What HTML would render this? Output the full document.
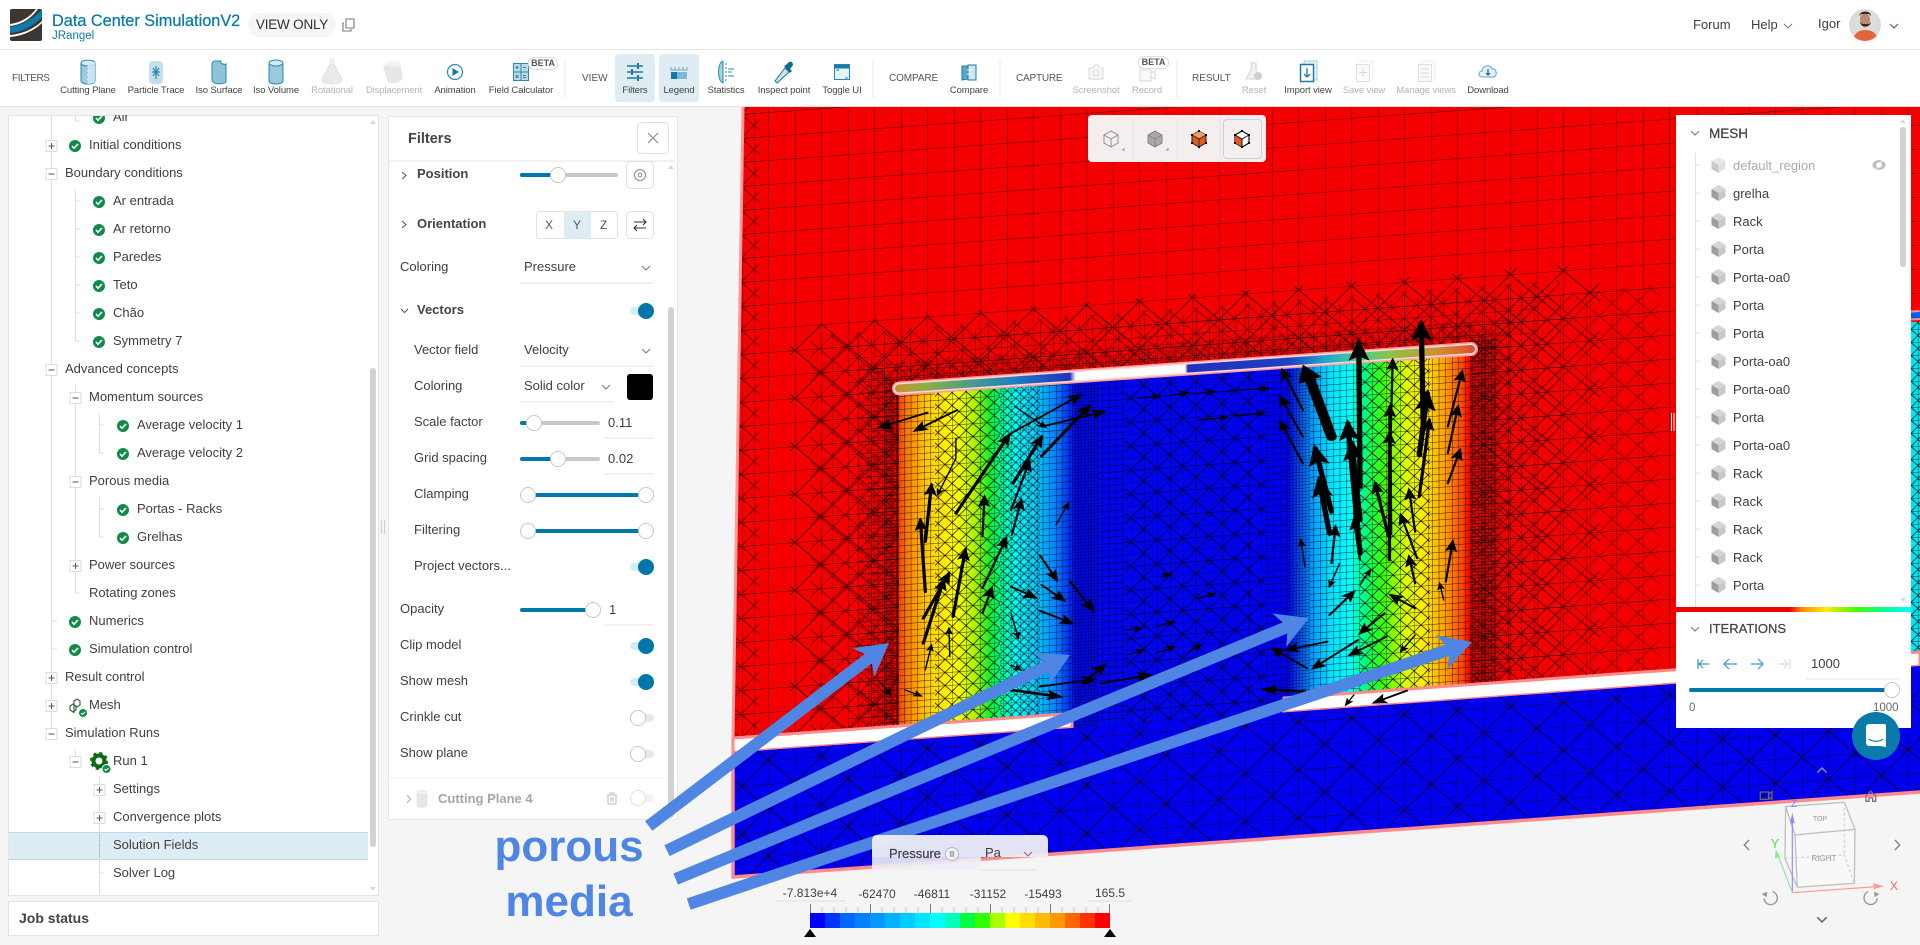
<!DOCTYPE html>
<html><head><meta charset="utf-8"><title>Data Center SimulationV2</title>
<style>
html,body{margin:0;padding:0;width:1920px;height:945px;overflow:hidden;background:#f5f5f5;font-family:"Liberation Sans",sans-serif;color:#3f3f3f}
svg{position:absolute;left:0;top:0}
.p{position:absolute;background:#fff}
.t{position:absolute;white-space:nowrap;line-height:16px;font-size:13px;z-index:4}
.l{position:absolute;white-space:nowrap;line-height:12px;font-size:9.5px;letter-spacing:-.1px;text-align:center;width:90px;top:85px;color:#444;z-index:4}
.o{color:#b4b4b4}
.s{font-size:10px;color:#555;top:73px;z-index:4;position:absolute;line-height:12px}
.b{font-weight:bold}
.g{font-size:9px;font-weight:bold;color:#555;line-height:11px;z-index:4;position:absolute;text-align:center;background:#fff;border:1px solid #ddd;border-radius:6px}
</style></head><body>

<svg width="1920" height="945" style="z-index:1">
<defs>
<pattern id="g26" width="26.5" height="24" patternUnits="userSpaceOnUse" patternTransform="matrix(1 -.0725 0 1 0 0)"><path d="M0 0H26.5M0 0V24" fill="none" stroke="#200" stroke-width=".7"/></pattern>
<pattern id="g13" width="13" height="12" patternUnits="userSpaceOnUse" patternTransform="matrix(1 -.0725 0 1 0 0)"><path d="M0 0H13M0 0V12" fill="none" stroke="#000" stroke-width=".8"/></pattern>
<pattern id="g6" width="6.6" height="6.5" patternUnits="userSpaceOnUse" patternTransform="matrix(1 -.0725 0 1 0 0)"><path d="M0 0H6.6M0 0V6.5" fill="none" stroke="#000" stroke-width=".8"/></pattern>
<pattern id="g3" width="3.2" height="3.2" patternUnits="userSpaceOnUse" patternTransform="matrix(1 -.0725 0 1 0 0)"><path d="M0 0H3.2M0 0V3.2" fill="none" stroke="#000" stroke-width=".7"/></pattern>
<pattern id="d40" width="53" height="48" patternUnits="userSpaceOnUse" patternTransform="matrix(1 -.0725 0 1 0 0)"><path d="M26.5 0L53 24L26.5 48L0 24Z" fill="none" stroke="#100" stroke-width=".7"/></pattern>
<pattern id="d20" width="26" height="24" patternUnits="userSpaceOnUse" patternTransform="matrix(1 -.0725 0 1 0 0)"><path d="M13 0L26 12L13 24L0 12ZM0 0H26M0 0V24" fill="none" stroke="#000" stroke-width=".75"/></pattern>
<pattern id="d10" width="14" height="13" patternUnits="userSpaceOnUse" patternTransform="matrix(1 -.0725 0 1 0 0)"><path d="M7 0L14 6.5L7 13L0 6.5ZM0 0H14M0 0V13" fill="none" stroke="#000" stroke-width=".65"/></pattern>
<pattern id="d6" width="8.5" height="8" patternUnits="userSpaceOnUse" patternTransform="matrix(1 -.0725 0 1 0 0)"><path d="M4.2 0L8.5 4L4.2 8L0 4ZM0 0H8.5M0 0V8" fill="none" stroke="#000" stroke-width=".55"/></pattern>
<linearGradient id="cylg" gradientUnits="userSpaceOnUse" x1="899" y1="0" x2="1470" y2="0">
<stop offset="0" stop-color="#e84a00"/><stop offset=".02" stop-color="#ff8c00"/><stop offset=".055" stop-color="#ffd400"/><stop offset=".1" stop-color="#ffff00"/><stop offset=".135" stop-color="#a8f000"/><stop offset=".16" stop-color="#10ee30"/><stop offset=".185" stop-color="#00ffb0"/><stop offset=".205" stop-color="#00ffff"/><stop offset=".245" stop-color="#00c4ff"/><stop offset=".275" stop-color="#0080ff"/><stop offset=".31" stop-color="#0008ee"/><stop offset=".68" stop-color="#0000f0"/><stop offset=".72" stop-color="#0090ff"/><stop offset=".755" stop-color="#00e0ff"/><stop offset=".79" stop-color="#00ffff"/><stop offset=".815" stop-color="#00ff80"/><stop offset=".85" stop-color="#40ff00"/><stop offset=".885" stop-color="#d8ff00"/><stop offset=".92" stop-color="#ffea00"/><stop offset=".955" stop-color="#ffa000"/><stop offset=".985" stop-color="#ff5000"/><stop offset="1" stop-color="#f50000"/>
</linearGradient>
<linearGradient id="cyl3" gradientUnits="userSpaceOnUse" x1="1790" y1="0" x2="1910" y2="0">
<stop offset="0" stop-color="#f50000"/><stop offset=".1" stop-color="#ff8c00"/><stop offset=".3" stop-color="#ffea00"/><stop offset=".55" stop-color="#40ff00"/><stop offset=".8" stop-color="#00ffa0"/><stop offset="1" stop-color="#00ffff"/>
</linearGradient>
<linearGradient id="bar" gradientUnits="userSpaceOnUse" x1="897" y1="0" x2="1473" y2="0">
<stop offset="0" stop-color="#c89030"/><stop offset=".05" stop-color="#8cb040"/><stop offset=".12" stop-color="#50a080"/><stop offset=".2" stop-color="#2080c0"/><stop offset=".3" stop-color="#2030c0"/><stop offset=".31" stop-color="#fff"/><stop offset=".5" stop-color="#fff"/><stop offset=".505" stop-color="#2030c0"/><stop offset=".68" stop-color="#2040c0"/><stop offset=".74" stop-color="#20a0d0"/><stop offset=".8" stop-color="#40d0a0"/><stop offset=".86" stop-color="#90c040"/><stop offset=".94" stop-color="#d09030"/><stop offset="1" stop-color="#e05030"/>
</linearGradient>
<clipPath id="hole"><polygon points="899,392 1470,352 1470,685 1284,698 1284,716 1072,732 1072,713 899,726"/></clipPath>
<clipPath id="wall"><polygon points="743,107 1920,107 1920,652 733,738"/></clipPath>
<marker id="ah" viewBox="0 0 10 8" refX="8" refY="4" markerWidth="5" markerHeight="4.4" orient="auto"><path d="M0 0L10 4L0 8L2 4Z" fill="#000"/></marker>
<marker id="ahs" viewBox="0 0 10 8" refX="8" refY="4" markerWidth="7" markerHeight="6" orient="auto"><path d="M0 0L10 4L0 8L2 4Z" fill="#000"/></marker>
</defs>

<polygon points="743,107 1920,107 1920,652 733,738" fill="#f50000"/>
<g clip-path="url(#wall)">
<rect x="730" y="107" width="1190" height="640" fill="url(#g26)"/>
<rect x="730" y="107" width="30" height="640" fill="url(#d20)" opacity=".7"/>
<polygon points="790,326 1600,262 1600,680 790,736" fill="url(#d40)"/>
<polygon points="810,336 1560,280 1560,680 810,736" fill="url(#d20)" opacity=".6"/>
<polygon points="848,340 1530,290 1530,680 848,730" fill="url(#g13)" opacity=".8"/>
<polygon points="860,364 1510,318 1510,680 860,728" fill="url(#d10)" opacity=".5"/>
<polygon points="868,372 1497,328 1497,690 868,730" fill="url(#g6)" opacity=".85"/>
<polygon points="884,378 899,378 899,730 884,730" fill="url(#g3)"/>
<polygon points="1470,340 1497,338 1497,690 1470,690" fill="url(#g3)"/>
<polygon points="1500,300 1660,285 1660,680 1500,690" fill="url(#d20)" opacity=".5"/>
</g>
<rect x="1676" y="605" width="244" height="9" fill="#f50000"/>
<rect x="1790" y="605" width="130" height="9" fill="url(#cyl3)"/>

<polygon points="899,392 1470,352 1470,685 1284,698 1284,716 1072,732 1072,713 899,726" fill="url(#cylg)"/>
<g clip-path="url(#hole)">
<rect x="899" y="340" width="36" height="400" fill="url(#g6)"/>
<rect x="935" y="340" width="65" height="400" fill="url(#d10)"/>
<rect x="1000" y="340" width="40" height="400" fill="url(#d6)"/>
<rect x="1040" y="340" width="32" height="400" fill="url(#g6)"/>
<rect x="1072" y="340" width="26" height="400" fill="url(#g3)"/>
<rect x="1098" y="340" width="27" height="400" fill="url(#g6)"/>
<rect x="1125" y="340" width="140" height="400" fill="url(#d20)"/>
<rect x="1125" y="340" width="140" height="400" fill="url(#g13)" opacity=".6"/>
<rect x="1265" y="340" width="23" height="400" fill="url(#g6)"/>
<rect x="1288" y="340" width="22" height="400" fill="url(#g3)"/>
<rect x="1310" y="340" width="50" height="400" fill="url(#g6)"/>
<rect x="1360" y="340" width="70" height="400" fill="url(#d10)"/>
<rect x="1430" y="340" width="40" height="400" fill="url(#g6)"/>
</g>

<polygon points="1911,322 1920,322 1920,652 1911,653" fill="#00e4f0"/>
<polygon points="1911,322 1920,322 1920,652 1911,653" fill="url(#d10)"/>
<path d="M1905 316L1920 315" stroke="#ff9090" stroke-width="10"/><path d="M1905 316L1920 315" stroke="#0060f0" stroke-width="6"/>

<path d="M899 388.5L1471 349" stroke="#ff9a9a" stroke-width="14" stroke-linecap="round"/>
<path d="M899 388.5L1471 349" stroke="#f8d8d8" stroke-width="11" stroke-linecap="round"/>
<path d="M899 388.5L1471 349" stroke="url(#bar)" stroke-width="8" stroke-linecap="round"/>

<polygon points="733,738 1072,713.5 1072,728 733,752.5" fill="#fff" stroke="#ff8a8a" stroke-width="3"/>
<polygon points="1284,698 1920,652 1920,666 1284,712.5" fill="#fff" stroke="#ff8a8a" stroke-width="3"/>

<polygon points="733,752.5 1072,728 1284,712.5 1920,666 1920,792 733,877" fill="#0000ee"/>
<polygon points="733,752.5 1072,728 1284,712.5 1920,666 1920,792 733,877" fill="url(#g26)"/>
<polygon points="733,752.5 1072,728 1284,712.5 1920,666 1920,792 733,877" fill="url(#d40)"/>
<path d="M733 752.5L733 877L1920 792" fill="none" stroke="#ff8a8a" stroke-width="3.5"/>
<path d="M743 107L733 738" fill="none" stroke="#ff9a9a" stroke-width="3"/>

<g transform="translate(860,320) scale(.4082,.3333)" fill="none" stroke="#000" stroke-linecap="round">
<g stroke-width="3.500" marker-end="url(#ahs)">
<path d="M680 235L735 228"/><path d="M750 228L805 218"/><path d="M815 222L870 215"/><path d="M900 212L1000 205"/>
<path d="M830 300L900 292"/><path d="M920 288L990 280"/>
<path d="M650 930L690 925"/><path d="M725 920L770 905"/><path d="M655 1005L695 990"/><path d="M725 1000L770 980"/><path d="M800 1000L835 975"/><path d="M740 770L760 760"/><path d="M830 835L870 820"/>
<path d="M380 260L455 322"/><path d="M235 355L235 415L190 525"/>
<path d="M220 1010L218 925"/><path d="M370 880L388 955"/><path d="M160 1050L175 975"/><path d="M370 1035L395 1050"/><path d="M45 1080L75 1125"/><path d="M110 1110L150 1128"/>
<path d="M480 615L510 550"/><path d="M1090 740L1080 660"/><path d="M1225 795L1250 750"/><path d="M1360 945L1325 995"/><path d="M1210 1125L1190 1155"/><path d="M1430 840L1420 790"/><path d="M1175 730L1150 800"/>
</g>
<g stroke-width="5.500" marker-end="url(#ahs)">
<path d="M165 278L48 322"/><path d="M238 270L135 332"/><path d="M445 320L598 275"/><path d="M370 340L540 225"/>
<path d="M370 570L415 425"/><path d="M372 645L395 540"/><path d="M300 650L305 530"/>
<path d="M300 805L358 655"/><path d="M300 880L323 805"/><path d="M370 800L430 833"/><path d="M445 795L500 842"/><path d="M515 785L570 870"/><path d="M440 872L520 910"/><path d="M440 705L482 780"/>
<path d="M440 1100L575 1078"/><path d="M545 1090L600 1035"/><path d="M590 1090L710 1065"/>
<path d="M1085 270L1035 150"/><path d="M1085 350L1030 230"/><path d="M1085 430L1030 305"/>
<path d="M1295 570L1305 120"/><path d="M1440 320L1475 155"/><path d="M1440 400L1465 260"/><path d="M1440 490L1470 390"/>
<path d="M1365 715L1325 585"/><path d="M1360 635L1345 510"/><path d="M1155 730L1165 620"/><path d="M1225 720L1210 600"/><path d="M1435 785L1452 665"/><path d="M1360 790L1345 710"/><path d="M1360 865L1300 825"/><path d="M1150 885L1210 815"/>
<path d="M1145 965L1045 990"/><path d="M1095 1045L1010 985"/><path d="M1220 960L1110 1045"/><path d="M1290 950L1200 1005"/><path d="M1285 880L1225 940"/><path d="M1340 1112L1260 1148"/>
</g>
<g stroke-width="8" marker-end="url(#ah)">
<path d="M235 580L365 345"/><path d="M445 408L562 258"/><path d="M375 490L445 350"/>
<path d="M160 665L175 495"/><path d="M160 815L148 600"/><path d="M155 895L218 760"/><path d="M155 970L205 780"/><path d="M228 890L258 690"/>
<path d="M370 1110L490 1130"/><path d="M1090 1115L990 1108"/>
<path d="M1300 640L1298 260"/><path d="M1297 720L1297 340"/><path d="M1370 530L1395 300"/><path d="M1295 650L1262 490"/>
</g>
<g stroke-width="13" marker-end="url(#ah)">
<path d="M1155 575L1115 385"/><path d="M1150 640L1125 480"/><path d="M1225 500L1222 70"/><path d="M1225 700L1195 310"/><path d="M1225 600L1205 370"/><path d="M1380 330L1375 10"/><path d="M1370 405L1390 220"/>
</g>
<path d="M1155 350L1100 170" stroke-width="26"/>
<path d="M1085 135L1075 190L1130 170Z" fill="#000"/>
</g>
</svg>

<!-- page chrome -->
<div class="p" style="left:0;top:0;width:1920px;height:49px;border-bottom:1.5px solid #e4e4e4;z-index:2"></div>
<div class="p" style="left:0;top:50px;width:1920px;height:56px;border-bottom:1.5px solid #e4e4e4;z-index:2"></div>
<div class="p" style="left:615px;top:54px;width:40px;height:48px;background:#dfecf3;border-radius:4px;z-index:2"></div>
<div class="p" style="left:659px;top:54px;width:40px;height:48px;background:#dfecf3;border-radius:4px;z-index:2"></div>

<div class="p" style="left:8px;top:115px;width:369px;height:779px;border:1px solid #e4e4e4;z-index:2;overflow:hidden"></div>
<div class="p" style="left:9px;top:832px;width:359px;height:26px;background:#deecf3;border-top:1px solid #b9dbe9;border-bottom:1px solid #b9dbe9;z-index:2"></div>
<div class="p" style="left:8px;top:901px;width:369px;height:33px;border:1px solid #e4e4e4;z-index:2"></div>
<div class="p" style="left:388px;top:116px;width:288px;height:702px;border:1px solid #e6e6e6;z-index:2"></div>
<div class="p" style="left:1676px;top:115px;width:235px;height:492px;z-index:2"></div>
<div class="p" style="left:1676px;top:612px;width:235px;height:116px;z-index:2"></div>
<div class="p" style="left:1088px;top:115px;width:178px;height:47px;background:#f4eeee;border-radius:4px;z-index:2"></div>
<div class="p" style="left:1223px;top:119px;width:37px;height:38px;background:transparent;border:1px solid #bcd6e4;border-radius:4px;z-index:2"></div>

<svg width="1920" height="945" style="z-index:3">
<defs>
<symbol id="ck" overflow="visible"><circle r="6" fill="#128a48"/><path d="M-3 0L-1 2.2L3 -2" fill="none" stroke="#fff" stroke-width="1.6"/></symbol>
<symbol id="ep" overflow="visible"><rect x="-5.5" y="-5.5" width="11" height="11" fill="#fff" stroke="#dcdcdc"/><path d="M-3 0H3M0 -3V3" stroke="#555"/></symbol>
<symbol id="em" overflow="visible"><rect x="-5.5" y="-5.5" width="11" height="11" fill="#fff" stroke="#dcdcdc"/><path d="M-3 0H3" stroke="#555"/></symbol>
<symbol id="cube" overflow="visible"><path d="M0 -8L7 -4L0 0L-7 -4Z" fill="#d6d6d6"/><path d="M-7 -4L0 0V8L-7 4Z" fill="#9e9e9e"/><path d="M7 -4L0 0V8L7 4Z" fill="#c9c9c9"/></symbol>
<symbol id="ton" overflow="visible"><rect x="-16" y="-4" width="24" height="8" rx="4" fill="#d5ecf6"/><circle r="8" fill="#0077aa"/></symbol>
<symbol id="tof" overflow="visible"><rect x="0" y="-4" width="16" height="8" rx="4" fill="#e8e8e8"/><circle r="7.5" fill="#fff" stroke="#c8c8c8"/></symbol>
<symbol id="th" overflow="visible"><circle r="7.5" fill="#fff" stroke="#c6c6c6"/></symbol>
<symbol id="cv" overflow="visible"><path d="M-4 -2L0 2L4 -2" fill="none" stroke="#777" stroke-width="1"/></symbol>
<symbol id="cy" overflow="visible"><path d="M-7 -9v18a7 3 0 0 0 14 0v-18" fill="#9cc9de" stroke="#2a88b0"/><ellipse cy="-9" rx="7" ry="3" fill="#d6eaf4" stroke="#2a88b0"/></symbol>
</defs>

<!-- logo -->
<rect x="10" y="9" width="32" height="32" rx="2" fill="#3b3632"/>
<path d="M10 27C20 26 33 20 42 9V17C34 26 22 32 10 33Z" fill="#0a7dae"/>
<path d="M10 35C22 34 34 29 42 21V23C34 31 22 36 10 37Z" fill="#fff"/>
<path d="M10 24C20 23 30 17 36 9H38C31 19 21 25 10 26Z" fill="#fff"/>
<path d="M344 23h-1v8h8v-2M346 19h8v9h-8z" fill="none" stroke="#777" stroke-width="1.1"/>
<!-- dividers -->
<path d="M565 60V98M873 60V98M1000 60V98M1177 60V98" stroke="#e8e8e8"/>

<g transform="translate(88,72)"><use href="#cy"/><path d="M0 -14V14" stroke="#fff" stroke-dasharray="2 2"/><path d="M0 -10h7v19a7 3 0 0 1 -7 3z" fill="#d6eaf4" opacity=".8"/></g>
<g transform="translate(156,72)"><rect x="-7" y="-11" width="14" height="23" rx="4" fill="#c4dfeb"/><path d="M-3 -4L3 4M3 -4L-3 4M0 -6V7M-4 0H4" stroke="#2a88b0" stroke-width="1.2"/></g>
<g transform="translate(219,72)"><path d="M-7 -8a3 3 0 0 1 3 -3h6c-3 2 4 4 5 3v18c-4 3-14 2-14-2z" fill="#8fc3da" stroke="#2a88b0"/></g>
<g transform="translate(276,72)"><use href="#cy"/></g>
<g transform="translate(332,72)" opacity=".3"><path d="M0 -12L10 8a10 4 0 0 1 -20 0z" fill="#bbb" stroke="#999"/><circle cy="-11" r="3" fill="#ccc"/></g>
<g transform="translate(394,72)" opacity=".35"><path d="M-11 -6L6 -9L9 6C5 13-6 12-7 8z" fill="#bbb"/><ellipse cx="-1" cy="-8" rx="8" ry="3" fill="#ddd"/></g>
<g transform="translate(455,72)"><circle r="7.5" fill="#fff" stroke="#2a88b0" stroke-width="1.2"/><path d="M-2.5 -4L4 0L-2.5 4Z" fill="#0a7dae"/></g>
<g transform="translate(521,72)"><rect x="-7.5" y="-8.5" width="15" height="17" fill="#bcdbe9" stroke="#2a88b0"/><path d="M0 -8.5V8.5M-7.5 0H7.5" stroke="#2a88b0"/><path d="M-5.5 -4.5h3M-4 -6v3M2 -4.5h3M-5.5 3l3 3M-2.5 3l-3 3M2 3.5h3M2 5.5h3" stroke="#0a6a90" stroke-width=".8"/></g>
<g transform="translate(635,72)" stroke="#1c7ba6" stroke-width="1.4" fill="none"><path d="M-8 -6H8M-8 0H8M-8 6H8"/><path d="M3 -9V-3M-3 -3V3M3 3V9" stroke-width="2"/></g>
<g transform="translate(679,72)"><path d="M-8 -5V-2H8V-5M-4 -5V-2M0 -5V-2M4 -5V-2" stroke="#6aa8c4" fill="none"/><rect x="-8" y="0" width="16" height="7" fill="#7fb8d0"/><rect x="-8" y="0" width="6" height="7" fill="#0a7dae"/></g>
<g transform="translate(726,72)"><path d="M-3 -11C-9 -9-9 9-3 11V-11" fill="#a8d0e2" stroke="#2a88b0"/><path d="M0 -9V9" stroke="#2a88b0" stroke-dasharray="2 2"/><path d="M2 -3H8M2 0H6M2 4H8" stroke="#2a88b0"/></g>
<g transform="translate(784,72)"><path d="M-7 11L-9 9L1 -4L5 0Z" fill="#cfe6f1" stroke="#1c7ba6"/><path d="M0 -6L6 1L8 -1L6 -3L9 -7C9 -10 7 -11 5 -10L2 -7Z" fill="#0a6a90"/></g>
<g transform="translate(842,72)"><rect x="-7.5" y="-7.5" width="15" height="15" fill="#e7f2f7" stroke="#2a88b0"/><rect x="-7.5" y="-7.5" width="15" height="4" fill="#1c7ba6"/><path d="M-5 -1v-1h2M5 5v1h-2" stroke="#2a88b0" fill="none"/></g>
<g transform="translate(969,72)"><path d="M-7 -6H-1V7L-7 8Z" fill="#5fa6c6" stroke="#1c7ba6"/><path d="M-1 -7H7V8H-1Z" fill="#cfe6f1" stroke="#1c7ba6"/><path d="M-2 -2H3M-2 2H2" stroke="#fff"/></g>
<g transform="translate(1096,72)" opacity=".45"><path d="M-7 -4H-3L-1 -7H2L4 -4H7V7H-7Z" fill="#f2f2f2" stroke="#aaa"/><circle cy="1" r="3" fill="none" stroke="#aaa"/></g>
<g transform="translate(1147,74)" opacity=".45"><rect x="-7" y="-4" width="11" height="11" fill="#f2f2f2" stroke="#aaa"/><path d="M4 -1L8 -3V5L4 3M-8 -6H5" fill="none" stroke="#aaa"/></g>
<g transform="translate(1254,72)" opacity=".4"><path d="M-3 -9V-2L-8 7H4L2 -2V-9Z" fill="#ddd" stroke="#999"/><circle cx="4" cy="4" r="4" fill="#888"/></g>
<g transform="translate(1308,72)"><rect x="-4" y="-11" width="13" height="19" fill="#e8f3f8" stroke="#9ccbe0"/><rect x="-7.5" y="-7.5" width="13" height="17" fill="#fff" stroke="#1c7ba6" stroke-width="1.5"/><path d="M-1 -4V5M-4 2L-1 5L2 2" fill="none" stroke="#1c7ba6" stroke-width="1.3"/></g>
<g transform="translate(1364,72)" opacity=".45"><rect x="-4" y="-11" width="13" height="19" fill="#fafafa" stroke="#ddd"/><rect x="-7.5" y="-7.5" width="13" height="17" fill="#f4f4f4" stroke="#bbb"/><path d="M-1 -4V5M-5 .5H3" stroke="#aaa"/></g>
<g transform="translate(1426,72)" opacity=".45"><rect x="-4" y="-11" width="13" height="19" fill="#fafafa" stroke="#ddd"/><rect x="-7.5" y="-7.5" width="13" height="17" fill="#f4f4f4" stroke="#bbb"/><path d="M-5 -3H3M-5 1H3M-5 5H3" stroke="#aaa"/></g>
<g transform="translate(1488,71)"><path d="M-6 6C-10 6-10 0-6 0C-6 -6 3 -7 4 -2C9 -3 10 6 5 6Z" fill="#e6f2f8" stroke="#5aa6c8"/><path d="M0 -2V4M-2 2L0 4L2 2" fill="none" stroke="#0a6a90" stroke-width="1.2"/></g>

<!-- header right -->
<use href="#cv" x="1788" y="26"/>
<path d="M1890 24L1894 28L1898 24" fill="none" stroke="#555" stroke-width="1.1"/>
<clipPath id="av"><circle cx="1865" cy="25" r="16"/></clipPath>
<g clip-path="url(#av)"><rect x="1849" y="9" width="32" height="32" fill="#dcdcdc"/><path d="M1853 41C1854 33 1859 30 1865 30C1872 30 1877 33 1878 41Z" fill="#e4643c"/><ellipse cx="1865" cy="20" rx="5" ry="7.5" fill="#b98a70"/><path d="M1859 16C1860 10 1871 10 1871 16L1869 14H1861Z" fill="#3a2a22"/><path d="M1860 22C1861 28 1870 28 1871 22L1869 24H1862Z" fill="#3a2a22"/></g>

<!-- left tree lines -->
<g stroke="#dedede" fill="none">
<path d="M51.5 116V733M75.5 116V121H80M51.5 621H57M51.5 649H57"/>
<path d="M75.5 189V341H80M75.5 201H80M75.5 229H80M75.5 257H80M75.5 285H80M75.5 313H80"/>
<path d="M75.5 385V593H80"/>
<path d="M99.5 413V453H104M99.5 425H104"/>
<path d="M99.5 497V537H104M99.5 509H104"/>
<path d="M75.5 749V761M99.5 777V894M99.5 845H104M99.5 873H104"/>
</g>
<path d="M99.5 833V858" stroke="#a9c8d6"/>
<g>
<use href="#ep" x="51.5" y="146"/><use href="#em" x="51.5" y="174"/><use href="#em" x="51.5" y="370"/><use href="#ep" x="51.5" y="678"/><use href="#ep" x="51.5" y="706"/><use href="#em" x="51.5" y="734"/>
<use href="#em" x="75.5" y="398"/><use href="#em" x="75.5" y="482"/><use href="#ep" x="75.5" y="566"/><use href="#em" x="75.5" y="762"/>
<use href="#ep" x="99.5" y="790"/><use href="#ep" x="99.5" y="818"/>
</g>
<g>
<use href="#ck" x="99" y="118"/><use href="#ck" x="75" y="146"/>
<use href="#ck" x="99" y="202"/><use href="#ck" x="99" y="230"/><use href="#ck" x="99" y="258"/><use href="#ck" x="99" y="286"/><use href="#ck" x="99" y="314"/><use href="#ck" x="99" y="342"/>
<use href="#ck" x="123" y="426"/><use href="#ck" x="123" y="454"/><use href="#ck" x="123" y="510"/><use href="#ck" x="123" y="538"/>
<use href="#ck" x="75" y="622"/><use href="#ck" x="75" y="650"/>
</g>
<rect x="90" y="107" width="60" height="8" fill="#f5f5f5"/><path d="M8 115.5H377" stroke="#e4e4e4"/>
<g fill="none" stroke="#2c5d36" stroke-width="1.1"><path d="M74 701l3-2 3 2v4l-3 2-3-2zM70 706l3-2 3 2v4l-3 2-3-2zM74 705V713"/></g>
<g transform="translate(83,713)"><circle r="4.5" fill="#128a48" stroke="#fff"/><path d="M-2 0L-.5 1.5L2 -1" stroke="#fff" fill="none"/></g>
<circle cx="99" cy="761" r="5.5" fill="none" stroke="#0b6b12" stroke-width="4"/><circle cx="99" cy="761" r="7.5" fill="none" stroke="#0b6b12" stroke-width="3" stroke-dasharray="3 2.9"/>
<g transform="translate(106.500,769)"><circle r="4.5" fill="#128a48" stroke="#fff"/><path d="M-2 0L-.5 1.5L2 -1" stroke="#fff" fill="none"/></g>
<!-- left scrollbar -->
<rect x="370" y="368" width="6" height="479" rx="3" fill="#d2d2d2"/>
<path d="M370 124L373 120L376 124ZM370 887L373 891L376 887Z" fill="#d8d8d8"/>
<path d="M381.500 520V534M384.500 520V534" stroke="#cfcfcf"/>

<!-- Filters controls -->
<path d="M388 161H676" stroke="#e4e4e4"/>
<rect x="637.500" y="122.500" width="31" height="31" rx="4" fill="#fff" stroke="#e2e2e2"/>
<path d="M648 133L658 143M658 133L648 143" stroke="#888" stroke-width="1.1"/>
<path d="M402 172L406 175.500L402 179M402 221L406 224.500L402 228" fill="none" stroke="#555"/>
<rect x="520" y="173" width="98" height="4" rx="2" fill="#c9c9c9"/><rect x="520" y="173" width="38" height="4" rx="2" fill="#0077aa"/><use href="#th" x="558" y="175"/>
<rect x="626.500" y="161.500" width="27" height="27" rx="4" fill="#fff" stroke="#e2e2e2"/><circle cx="640" cy="175" r="5.500" fill="none" stroke="#888"/><circle cx="640" cy="175" r="1.800" fill="none" stroke="#888"/>
<rect x="536.500" y="211.500" width="81" height="27" rx="3" fill="#fff" stroke="#e2e2e2"/><rect x="564" y="212" width="27" height="26" fill="#deecf3"/>
<rect x="626.500" y="211.500" width="27" height="27" rx="4" fill="#fff" stroke="#e2e2e2"/><path d="M634 222H646M643 219L646 222L643 225M646 228H634M637 225L634 228L637 231" fill="none" stroke="#333" stroke-width="1.1"/>
<path d="M520 283H654M520 366H654M520 402H614M604 438H654M604 474H654M604 625H654" stroke="#e4e4e4"/>
<use href="#cv" x="646" y="268"/><use href="#cv" x="646" y="351"/><use href="#cv" x="606" y="387"/>
<path d="M401 309L404.500 312.500L408 309" fill="none" stroke="#555"/>
<use href="#ton" x="646" y="311"/>
<rect x="627" y="374" width="26" height="26" rx="3" fill="#000"/>
<rect x="520" y="421" width="80" height="4" rx="2" fill="#c9c9c9"/><rect x="520" y="421" width="14" height="4" rx="2" fill="#0077aa"/><use href="#th" x="534" y="423"/>
<rect x="520" y="457" width="80" height="4" rx="2" fill="#c9c9c9"/><rect x="520" y="457" width="38" height="4" rx="2" fill="#0077aa"/><use href="#th" x="558" y="459"/>
<rect x="528" y="493" width="118" height="4" fill="#0077aa"/><use href="#th" x="528" y="495"/><use href="#th" x="646" y="495"/>
<rect x="528" y="529" width="118" height="4" fill="#0077aa"/><use href="#th" x="528" y="531"/><use href="#th" x="646" y="531"/>
<use href="#ton" x="646" y="567"/>
<rect x="520" y="608" width="73" height="4" rx="2" fill="#0077aa"/><use href="#th" x="593" y="610"/>
<use href="#ton" x="646" y="646"/><use href="#ton" x="646" y="682"/><use href="#tof" x="638" y="718"/><use href="#tof" x="638" y="754"/>
<path d="M388 778H666" stroke="#eee"/>
<path d="M407 795L410.500 799L407 803" fill="none" stroke="#aaa"/>
<g transform="translate(422,799) scale(.7)" opacity=".45"><path d="M-7 -9v18a7 3 0 0 0 14 0v-18" fill="#ccc" stroke="#bbb"/><ellipse cy="-9" rx="7" ry="3" fill="#e4e4e4" stroke="#bbb"/></g>
<path d="M607 795H617M608 795V804H616V795M610 795V793H614V795M611 797V802M613 797V802" fill="none" stroke="#bbb"/>
<g opacity=".55"><use href="#tof" x="638" y="798"/></g>
<rect x="668" y="307" width="6" height="511" rx="3" fill="#d2d2d2"/>
<path d="M668 169L671 165L674 169Z" fill="#d8d8d8"/>

<!-- cube toolbar -->
<path d="M1133 118V160M1177 118V160M1220 118V160" stroke="#e9e4e4"/>
<g fill="none" stroke="#888" stroke-width=".9"><path d="M1111 131L1118 135V143L1111 147L1104 143V135ZM1104 135L1111 139L1118 135M1111 139V147"/><path d="M1122 150H1124V148M1166 150H1168V148"/></g>
<g transform="translate(1155,139)"><path d="M0 -8L7 -4V4L0 8L-7 4V-4Z" fill="#a8a8a8" stroke="#777" stroke-width=".8"/><path d="M-7 -4L0 0L7 -4M0 0V8" fill="none" stroke="#777" stroke-width=".7"/></g>
<g transform="translate(1199,139)"><path d="M0 -8L7 -4V4L0 8L-7 4V-4Z" fill="#e25a1c" stroke="#222"/><path d="M0 -8L7 -4L0 0L-7 -4Z" fill="#f09a70"/><path d="M-7 -4L0 0L7 -4M0 0V8" fill="none" stroke="#222" stroke-width=".8"/><path d="M0 -9v2M0 7v2M-7 -5v2M7 -5v2M-7 3v2M7 3v2" stroke="#000" stroke-width="2"/></g>
<g transform="translate(1242,139)"><path d="M0 -8L7 -4V4L0 8L-7 4V-4Z" fill="#fff" stroke="#111" stroke-width="1.2"/><path d="M-7 -4L0 0V8L-7 4Z" fill="#e25a1c"/><path d="M-7 -4L0 0L7 -4M0 0V8" fill="none" stroke="#111" stroke-width="1"/><path d="M0 -9v2M0 7v2M-7 -5v2M7 -5v2M-7 3v2M7 3v2" stroke="#000" stroke-width="2"/></g>

<!-- mesh panel -->
<path d="M1691 131L1695 135L1699 131M1691 627L1695 631L1699 627" fill="none" stroke="#777"/>
<path d="M1695.500 153V607" stroke="#e4e4e4"/>
<g stroke="#dedede"><path d="M1696 165H1700M1696 193H1700M1696 221H1700M1696 249H1700M1696 277H1700M1696 305H1700M1696 333H1700M1696 361H1700M1696 389H1700M1696 417H1700M1696 445H1700M1696 473H1700M1696 501H1700M1696 529H1700M1696 557H1700M1696 585H1700"/></g>
<use href="#cube" x="1718.500" y="165" opacity=".55"/><use href="#cube" x="1718.500" y="193"/><use href="#cube" x="1718.500" y="221"/><use href="#cube" x="1718.500" y="249"/><use href="#cube" x="1718.500" y="277"/><use href="#cube" x="1718.500" y="305"/><use href="#cube" x="1718.500" y="333"/><use href="#cube" x="1718.500" y="361"/><use href="#cube" x="1718.500" y="389"/><use href="#cube" x="1718.500" y="417"/><use href="#cube" x="1718.500" y="445"/><use href="#cube" x="1718.500" y="473"/><use href="#cube" x="1718.500" y="501"/><use href="#cube" x="1718.500" y="529"/><use href="#cube" x="1718.500" y="557"/><use href="#cube" x="1718.500" y="585"/>
<g transform="translate(1879,165)"><ellipse rx="6.500" ry="5" fill="#bdbdbd"/><circle r="2.800" fill="#fff"/><path d="M-3 4L3 -4" stroke="#fff"/></g>
<rect x="1900" y="127" width="6" height="140" rx="3" fill="#d2d2d2"/>
<path d="M1900 123L1903 119L1906 123ZM1900 598L1903 602L1906 598Z" fill="#dcdcdc"/>
<path d="M1671.500 413V431M1674 413V431" stroke="#fff"/>
<!-- iterations -->
<g fill="none" stroke="#3b97bd" stroke-width="1.2"><path d="M1698 659V669M1709 664H1700M1703 660L1699 664L1703 668"/><path d="M1737 664H1724M1729 659L1724 664L1729 669"/><path d="M1751 664H1763M1758 659L1763 664L1758 669"/></g>
<g fill="none" stroke="#dcdcdc" stroke-width="1.2"><path d="M1778 664H1788M1784 660L1788 664L1784 668M1790 659V669"/></g>
<path d="M1806 679H1899" stroke="#e4e4e4"/>
<rect x="1689" y="688" width="203" height="4" rx="2" fill="#0077aa"/><use href="#th" x="1892" y="690"/>
<!-- chat -->
<circle cx="1876" cy="736" r="24" fill="#0a7ba8"/>
<path d="M1869 724H1884A2 2 0 0 1 1886 726V747L1880 746H1869A3 3 0 0 1 1866 743V727A3 3 0 0 1 1869 724Z" fill="#fff"/>
<path d="M1869 739C1872 742 1880 742 1883 739" fill="none" stroke="#0a7ba8" stroke-width="1.2"/>
</svg>

<!-- annotation arrows -->
<svg width="1920" height="945" style="z-index:5">
<g fill="#4f86e3">
<path transform="translate(889,643) rotate(-37.3)" d="M-302 -6H-26L-32 -18L0 0L-32 18L-26 6H-302Z"/>
<path transform="translate(1070,655) rotate(-25.900)" d="M-448 -6H-26L-32 -18L0 0L-32 18L-26 6H-448Z"/>
<path transform="translate(1309,618) rotate(-22.400)" d="M-685 -6H-26L-32 -18L0 0L-32 18L-26 6H-685Z"/>
<path transform="translate(1472,642) rotate(-18.500)" d="M-826 -6H-26L-32 -18L0 0L-32 18L-26 6H-826Z"/>
</g>
</svg>
<div class="t b" style="left:469px;top:821px;width:200px;text-align:center;font-size:44px;line-height:52px;color:#4f86e3;z-index:5">porous</div>
<div class="t b" style="left:469px;top:876px;width:200px;text-align:center;font-size:44px;line-height:52px;color:#4f86e3;z-index:5">media</div>

<!-- legend -->
<div class="p" style="left:872px;top:835px;width:176px;height:22px;background:rgba(236,236,246,.96);border-radius:5px 5px 0 0;z-index:6"></div>
<div class="p" style="left:872px;top:857px;width:109px;height:13px;background:rgba(238,238,246,.9);z-index:6"></div>
<svg width="1920" height="945" style="z-index:6">
<circle cx="952" cy="854" r="6.500" fill="#f4f4fa" stroke="#b4b4c4"/><path d="M949.500 852H954.500M949.500 854H954.500M949.500 856H954.500" stroke="#555" stroke-width=".8"/>
<use href="#cv" x="1028" y="854"/>
<path d="M981 870H1036M775 901H846M1089 901H1132" stroke="#e0e0e0"/>
<g stroke="#c4c4c4"><path d="M822 907V913M834 907V913M846 907V913M858 907V913M882 907V913M894 907V913M906 907V913M918 907V913M942 907V913M954 907V913M966 907V913M978 907V913M1002 907V913M1014 907V913M1026 907V913M1038 907V913M1062 907V913M1074 907V913M1086 907V913M1098 907V913"/></g>
<g stroke="#777"><path d="M810.500 904V913M870.500 904V913M930.500 904V913M990.500 904V913M1050.500 904V913M1109.500 904V913"/></g>
<g>
<rect x="810" y="913" width="15" height="15" fill="#0000ff"/><rect x="825" y="913" width="15" height="15" fill="#0033ff"/><rect x="840" y="913" width="15" height="15" fill="#0066ff"/><rect x="855" y="913" width="15" height="15" fill="#0080ff"/><rect x="870" y="913" width="15" height="15" fill="#0099ff"/><rect x="885" y="913" width="15" height="15" fill="#00b2ff"/><rect x="900" y="913" width="15" height="15" fill="#00ccff"/><rect x="915" y="913" width="15" height="15" fill="#00e5ff"/><rect x="930" y="913" width="15" height="15" fill="#00ffff"/><rect x="945" y="913" width="15" height="15" fill="#00ffbb"/><rect x="960" y="913" width="15" height="15" fill="#00ff44"/><rect x="975" y="913" width="15" height="15" fill="#33ff00"/><rect x="990" y="913" width="15" height="15" fill="#aaff00"/><rect x="1005" y="913" width="15" height="15" fill="#ffff00"/><rect x="1020" y="913" width="15" height="15" fill="#ffdd00"/><rect x="1035" y="913" width="15" height="15" fill="#ffbb00"/><rect x="1050" y="913" width="15" height="15" fill="#ff9900"/><rect x="1065" y="913" width="15" height="15" fill="#ff6600"/><rect x="1080" y="913" width="15" height="15" fill="#ff3300"/><rect x="1095" y="913" width="15" height="15" fill="#ff0000"/>
</g>
<path d="M804 937L810 929L816 937ZM1104 937L1110 929L1116 937Z" fill="#000"/>

<!-- nav cube -->
<g transform="translate(1660,590) scale(.3333)" fill="none">
<path d="M405 735L585 718L583 880L412 892ZM405 735L377 650L553 637L585 718M377 650L375 805L412 892" stroke="#c0c0c0" stroke-width="4" fill="rgba(255,255,255,.35)"/>
<path d="M375 805L553 795L583 880M553 637V795" stroke="#d0d0d0" stroke-width="3.500" stroke-dasharray="9 7"/>
<path d="M397 908V690" stroke="#8d8dff" stroke-width="3.500"/><path d="M397 668L390 700H404Z" fill="#8d8dff"/>
<path d="M397 908L352 790" stroke="#8de88d" stroke-width="3.500"/><path d="M347 778L345 805L360 800Z" fill="#8de88d"/>
<path d="M397 908L650 890" stroke="#ff9a9a" stroke-width="3.500"/><path d="M672 889L640 880L642 897Z" fill="#ff9a9a"/>
<path d="M267 750L253 765L267 780" stroke="#888" stroke-width="4.500"/>
<path d="M705 750L719 765L705 780" stroke="#888" stroke-width="4.500"/>
<path d="M472 982L486 996L500 982" stroke="#666" stroke-width="4.500"/>
<path d="M472 548L486 534L500 548" stroke="#8a8ac8" stroke-width="4"/>
<path d="M338 905A20 20 0 1 1 312 925" stroke="#999" stroke-width="4"/><path d="M305 912L322 905L320 922Z" fill="#999"/>
<path d="M625 905A20 20 0 1 0 652 925" stroke="#999" stroke-width="4"/><path d="M658 912L642 905L644 922Z" fill="#999"/>
<path d="M301 606H326V628H301ZM326 612L336 606V628L326 622" stroke="#6a6a50" stroke-width="4"/>
<path d="M618 618L632 604L647 618V634H638V624H627V634H618Z" stroke="#8a6a80" stroke-width="4"/>
</g>
</svg>

<!-- header text -->
<div class="t" style="left:52px;top:12px;font-size:16.300px;line-height:18px;color:#0a7ba8;-webkit-text-stroke:.25px #0a7ba8">Data Center SimulationV2</div>
<div class="t" style="left:52px;top:29px;font-size:11.5px;line-height:14px;color:#0a7ba8">JRangel</div>
<div class="p" style="left:248px;top:13px;width:88px;height:24px;background:#f5f5f5;border-radius:12px;z-index:3"></div>
<div class="t" style="left:248px;top:17px;width:88px;text-align:center;font-size:13.500px;color:#2f2f2f;letter-spacing:-.2px">VIEW ONLY</div>
<div class="t" style="left:1693px;top:17px">Forum</div>
<div class="t" style="left:1751px;top:17px">Help</div>
<div class="t" style="left:1818px;top:16px">Igor</div>

<!-- toolbar text -->
<div class="s" style="left:12px;letter-spacing:-.4px">FILTERS</div>
<div class="s" style="left:582px">VIEW</div>
<div class="s" style="left:889px;letter-spacing:-.1px">COMPARE</div>
<div class="s" style="left:1016px;letter-spacing:-.2px">CAPTURE</div>
<div class="s" style="left:1192px">RESULT</div>
<div class="l" style="left:43px">Cutting Plane</div>
<div class="l" style="left:111px">Particle Trace</div>
<div class="l" style="left:174px">Iso Surface</div>
<div class="l" style="left:231px">Iso Volume</div>
<div class="l o" style="left:287px">Rotational</div>
<div class="l o" style="left:349px">Displacement</div>
<div class="l" style="left:410px">Animation</div>
<div class="l" style="left:476px">Field Calculator</div>
<div class="l" style="left:590px">Filters</div>
<div class="l" style="left:634px">Legend</div>
<div class="l" style="left:681px">Statistics</div>
<div class="l" style="left:739px">Inspect point</div>
<div class="l" style="left:797px">Toggle UI</div>
<div class="l" style="left:924px">Compare</div>
<div class="l o" style="left:1051px">Screenshot</div>
<div class="l o" style="left:1102px">Record</div>
<div class="l o" style="left:1209px">Reset</div>
<div class="l" style="left:1263px">Import view</div>
<div class="l o" style="left:1319px">Save view</div>
<div class="l o" style="left:1381px">Manage views</div>
<div class="l" style="left:1443px">Download</div>
<div class="g" style="left:528px;top:57px;width:28px">BETA</div>
<div class="g" style="left:1138px;top:56px;width:29px">BETA</div>

<!-- tree text -->
<div class="t" style="left:113px;top:109px;clip-path:inset(6px 0 0 0)">Air</div>
<div class="t" style="left:89px;top:137px">Initial conditions</div>
<div class="t" style="left:65px;top:165px">Boundary conditions</div>
<div class="t" style="left:113px;top:193px">Ar entrada</div>
<div class="t" style="left:113px;top:221px">Ar retorno</div>
<div class="t" style="left:113px;top:249px">Paredes</div>
<div class="t" style="left:113px;top:277px">Teto</div>
<div class="t" style="left:113px;top:305px">Chão</div>
<div class="t" style="left:113px;top:333px">Symmetry 7</div>
<div class="t" style="left:65px;top:361px">Advanced concepts</div>
<div class="t" style="left:89px;top:389px">Momentum sources</div>
<div class="t" style="left:137px;top:417px">Average velocity 1</div>
<div class="t" style="left:137px;top:445px">Average velocity 2</div>
<div class="t" style="left:89px;top:473px">Porous media</div>
<div class="t" style="left:137px;top:501px">Portas - Racks</div>
<div class="t" style="left:137px;top:529px">Grelhas</div>
<div class="t" style="left:89px;top:557px">Power sources</div>
<div class="t" style="left:89px;top:585px">Rotating zones</div>
<div class="t" style="left:89px;top:613px">Numerics</div>
<div class="t" style="left:89px;top:641px">Simulation control</div>
<div class="t" style="left:65px;top:669px">Result control</div>
<div class="t" style="left:89px;top:697px">Mesh</div>
<div class="t" style="left:65px;top:725px">Simulation Runs</div>
<div class="t" style="left:113px;top:753px">Run 1</div>
<div class="t" style="left:113px;top:781px">Settings</div>
<div class="t" style="left:113px;top:809px">Convergence plots</div>
<div class="t" style="left:113px;top:837px">Solution Fields</div>
<div class="t" style="left:113px;top:865px">Solver Log</div>
<div class="t b" style="left:19px;top:910px;font-size:14px;color:#444">Job status</div>

<!-- filters text -->
<div class="t b" style="left:408px;top:131px;font-size:14.500px;color:#444">Filters</div>
<div class="t b" style="left:417px;top:166px;color:#444">Position</div>
<div class="t b" style="left:417px;top:216px;color:#444">Orientation</div>
<div class="t" style="left:545px;top:217px;font-size:12px;color:#555">X</div>
<div class="t" style="left:573px;top:217px;font-size:12px;color:#555">Y</div>
<div class="t" style="left:600px;top:217px;font-size:12px;color:#555">Z</div>
<div class="t" style="left:400px;top:259px">Coloring</div>
<div class="t" style="left:524px;top:259px">Pressure</div>
<div class="t b" style="left:417px;top:302px;color:#444">Vectors</div>
<div class="t" style="left:414px;top:342px">Vector field</div>
<div class="t" style="left:524px;top:342px">Velocity</div>
<div class="t" style="left:414px;top:378px">Coloring</div>
<div class="t" style="left:524px;top:378px">Solid color</div>
<div class="t" style="left:414px;top:414px">Scale factor</div>
<div class="t" style="left:608px;top:415px">0.11</div>
<div class="t" style="left:414px;top:450px">Grid spacing</div>
<div class="t" style="left:608px;top:451px">0.02</div>
<div class="t" style="left:414px;top:486px">Clamping</div>
<div class="t" style="left:414px;top:522px">Filtering</div>
<div class="t" style="left:414px;top:558px">Project vectors...</div>
<div class="t" style="left:400px;top:601px">Opacity</div>
<div class="t" style="left:609px;top:602px">1</div>
<div class="t" style="left:400px;top:637px">Clip model</div>
<div class="t" style="left:400px;top:673px">Show mesh</div>
<div class="t" style="left:400px;top:709px">Crinkle cut</div>
<div class="t" style="left:400px;top:745px">Show plane</div>
<div class="t b" style="left:438px;top:791px;color:#a6a6a6">Cutting Plane 4</div>

<!-- mesh text -->
<div class="t" style="left:1709px;top:126px;font-size:13.500px;color:#444;-webkit-text-stroke:.25px #444">MESH</div>
<div class="t" style="left:1733px;top:158px;color:#aaa">default_region</div>
<div class="t" style="left:1733px;top:186px">grelha</div>
<div class="t" style="left:1733px;top:214px">Rack</div>
<div class="t" style="left:1733px;top:242px">Porta</div>
<div class="t" style="left:1733px;top:270px">Porta-oa0</div>
<div class="t" style="left:1733px;top:298px">Porta</div>
<div class="t" style="left:1733px;top:326px">Porta</div>
<div class="t" style="left:1733px;top:354px">Porta-oa0</div>
<div class="t" style="left:1733px;top:382px">Porta-oa0</div>
<div class="t" style="left:1733px;top:410px">Porta</div>
<div class="t" style="left:1733px;top:438px">Porta-oa0</div>
<div class="t" style="left:1733px;top:466px">Rack</div>
<div class="t" style="left:1733px;top:494px">Rack</div>
<div class="t" style="left:1733px;top:522px">Rack</div>
<div class="t" style="left:1733px;top:550px">Rack</div>
<div class="t" style="left:1733px;top:578px">Porta</div>
<div class="t" style="left:1709px;top:621px;font-size:13px;color:#444;-webkit-text-stroke:.25px #444">ITERATIONS</div>
<div class="t" style="left:1811px;top:656px">1000</div>
<div class="t" style="left:1689px;top:700px;font-size:11.500px;color:#666">0</div>
<div class="t" style="left:1873px;top:700px;font-size:11.500px;color:#666;z-index:3">1000</div>

<!-- legend text -->
<div class="t" style="left:889px;top:846px;color:#3f3f4a;-webkit-text-stroke:.2px #3f3f4a;z-index:7">Pressure</div>
<div class="t" style="left:985px;top:845px;z-index:7">Pa</div>
<div class="t" style="left:765px;top:885px;width:90px;text-align:center;font-size:12px;z-index:7">-7.813e+4</div>
<div class="t" style="left:832px;top:886px;width:90px;text-align:center;font-size:12px;z-index:7">-62470</div>
<div class="t" style="left:887px;top:886px;width:90px;text-align:center;font-size:12px;z-index:7">-46811</div>
<div class="t" style="left:943px;top:886px;width:90px;text-align:center;font-size:12px;z-index:7">-31152</div>
<div class="t" style="left:998px;top:886px;width:90px;text-align:center;font-size:12px;z-index:7">-15493</div>
<div class="t" style="left:1065px;top:885px;width:90px;text-align:center;font-size:12px;z-index:7">165.5</div>
<svg width="1920" height="945" style="z-index:7"><g font-family="Liberation Sans,sans-serif">
<text x="1820" y="821" font-size="7" fill="#999" text-anchor="middle">TOP</text>
<text x="1824" y="861" font-size="8" fill="#999" text-anchor="middle">RIGHT</text>
<text x="1794" y="807" font-size="10" fill="#7d7dff" text-anchor="middle">Z</text>
<text x="1775" y="848" font-size="13" fill="#52e052" text-anchor="middle">Y</text>
<text x="1894" y="890" font-size="12" fill="#ff6060" text-anchor="middle">X</text>
</g></svg>
</body></html>
